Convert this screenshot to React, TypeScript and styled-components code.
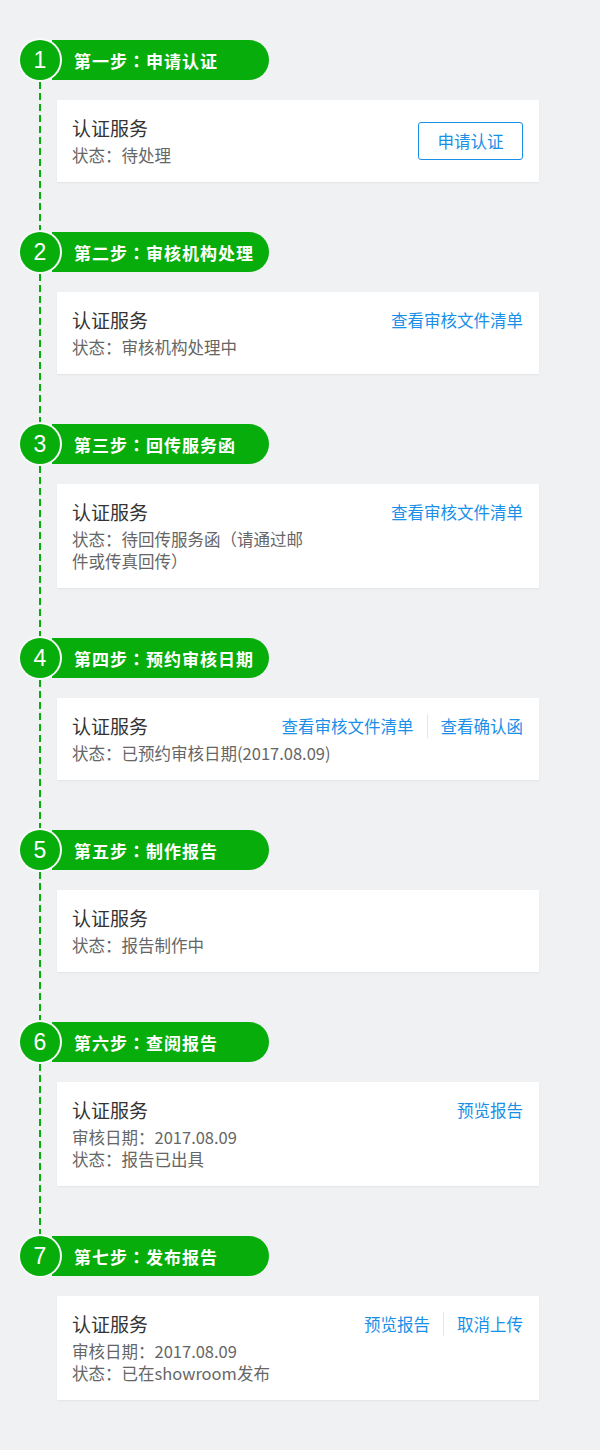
import styled, { createGlobalStyle } from 'styled-components'

const GREEN = '#07ad0b'
const BLUE = '#1a8fe8'

const GlobalStyle = createGlobalStyle`
  html, body {
    margin: 0;
    padding: 0;
    background: #f0f1f3;
  }
  body {
    font-family: "Noto Sans CJK SC", "Noto Sans", "Liberation Sans", sans-serif;
  }
`

type Action = { label: string; kind: 'button' | 'link' }

type StepData = {
  no: number
  title: string
  lines: string[]
  actions: Action[]
  narrow?: boolean
}

const steps: StepData[] = [
  {
    no: 1,
    title: '第一步：申请认证',
    lines: ['状态：待处理'],
    actions: [{ label: '申请认证', kind: 'button' }],
  },
  {
    no: 2,
    title: '第二步：审核机构处理',
    lines: ['状态：审核机构处理中'],
    actions: [{ label: '查看审核文件清单', kind: 'link' }],
  },
  {
    no: 3,
    title: '第三步：回传服务函',
    lines: ['状态：待回传服务函（请通过邮件或传真回传）'],
    actions: [{ label: '查看审核文件清单', kind: 'link' }],
    narrow: true,
  },
  {
    no: 4,
    title: '第四步：预约审核日期',
    lines: ['状态：已预约审核日期(2017.08.09)'],
    actions: [
      { label: '查看审核文件清单', kind: 'link' },
      { label: '查看确认函', kind: 'link' },
    ],
  },
  {
    no: 5,
    title: '第五步：制作报告',
    lines: ['状态：报告制作中'],
    actions: [],
  },
  {
    no: 6,
    title: '第六步：查阅报告',
    lines: ['审核日期：2017.08.09', '状态：报告已出具'],
    actions: [{ label: '预览报告', kind: 'link' }],
  },
  {
    no: 7,
    title: '第七步：发布报告',
    lines: ['审核日期：2017.08.09', '状态：已在showroom发布'],
    actions: [
      { label: '预览报告', kind: 'link' },
      { label: '取消上传', kind: 'link' },
    ],
  },
]

export default function App() {
  return (
    <>
      <GlobalStyle />
      <Page>
        {steps.map((s, i) => {
          const hasButton = s.actions.some((a) => a.kind === 'button')
          return (
            <Step key={s.no}>
              <Header>
                <Num>{s.no}</Num>
                <Pill>{s.title}</Pill>
              </Header>
              <Body line={i < steps.length - 1}>
                <Card>
                  <CardTitle>认证服务</CardTitle>
                  {s.actions.length > 0 && (
                    <Actions tall={hasButton}>
                      {s.actions.map((a, k) =>
                        a.kind === 'button' ? (
                          <Button key={a.label}>{a.label}</Button>
                        ) : (
                          <LinkItem key={a.label} sep={k > 0}>
                            {a.label}
                          </LinkItem>
                        )
                      )}
                    </Actions>
                  )}
                  {s.lines.map((l) => (
                    <Status key={l} narrow={s.narrow} short={hasButton}>
                      {l}
                    </Status>
                  ))}
                </Card>
              </Body>
            </Step>
          )
        })}
      </Page>
    </>
  )
}

const Page = styled.div`
  width: 600px;
  box-sizing: border-box;
  padding: 40px 61px 52px 20px;
`

const Step = styled.div`
  display: flex;
  flex-direction: column;
`

const Header = styled.div`
  display: flex;
  align-items: center;
  height: 40px;
`

const Num = styled.div`
  position: relative;
  z-index: 1;
  flex-shrink: 0;
  width: 40px;
  height: 40px;
  border-radius: 50%;
  background: ${GREEN};
  box-shadow: 0 0 0 2px #f7f8f8;
  color: #fff;
  font-family: "Liberation Sans", Arial, sans-serif;
  font-size: 23px;
  display: flex;
  align-items: center;
  justify-content: center;
`

const Pill = styled.div`
  height: 40px;
  width: 217px;
  margin-left: -8px;
  padding-left: 22px;
  box-sizing: border-box;
  border-radius: 0 20px 20px 0;
  background: ${GREEN};
  color: #fff;
  font-family: "Noto Sans CJK TC", "Noto Sans CJK SC", sans-serif;
  font-size: 17px;
  letter-spacing: 1px;
  font-weight: 700;
  display: flex;
  align-items: center;
  white-space: nowrap;
`

const Body = styled.div<{ line: boolean }>`
  padding: 20px 0 50px 37px;
  background: ${({ line }) =>
    line
      ? `repeating-linear-gradient(to bottom, ${GREEN} 0 7px, transparent 7px 11px) 19px 2px / 2px 100% no-repeat`
      : 'none'};
`

const Card = styled.div`
  background: #fff;
  box-shadow: 0 1px 2px rgba(0, 0, 0, 0.06);
  padding: 16px 16px 16px 15px;
  display: grid;
  grid-template-columns: 1fr auto;
  column-gap: 12px;
  align-items: start;
`

const CardTitle = styled.div`
  grid-column: 1;
  grid-row: 1;
  font-size: 19px;
  line-height: 24px;
  color: #333;
  margin-bottom: 4px;
`

const Status = styled.div<{ narrow?: boolean; short?: boolean }>`
  grid-column: ${({ short }) => (short ? '1' : '1 / -1')};
  font-size: 16.5px;
  line-height: 22px;
  color: #666;
  max-width: ${({ narrow }) => (narrow ? '240px' : 'none')};
`

const Actions = styled.div<{ tall?: boolean }>`
  grid-column: 2;
  grid-row: ${({ tall }) => (tall ? '1 / span 2' : '1')};
  align-self: ${({ tall }) => (tall ? 'center' : 'start')};
  display: flex;
  align-items: center;
`

const Button = styled.button`
  width: 105px;
  height: 38px;
  border: 1px solid ${BLUE};
  border-radius: 3px;
  background: #fff;
  color: ${BLUE};
  font-family: inherit;
  font-size: 16.5px;
  cursor: pointer;
`

const LinkItem = styled.a<{ sep: boolean }>`
  white-space: nowrap;
  font-size: 16.5px;
  line-height: 24px;
  color: ${BLUE};
  cursor: pointer;
  margin-left: ${({ sep }) => (sep ? '13px' : '0')};
  padding-left: ${({ sep }) => (sep ? '13px' : '0')};
  border-left: ${({ sep }) => (sep ? '1px solid #e6e6e6' : 'none')};
`
